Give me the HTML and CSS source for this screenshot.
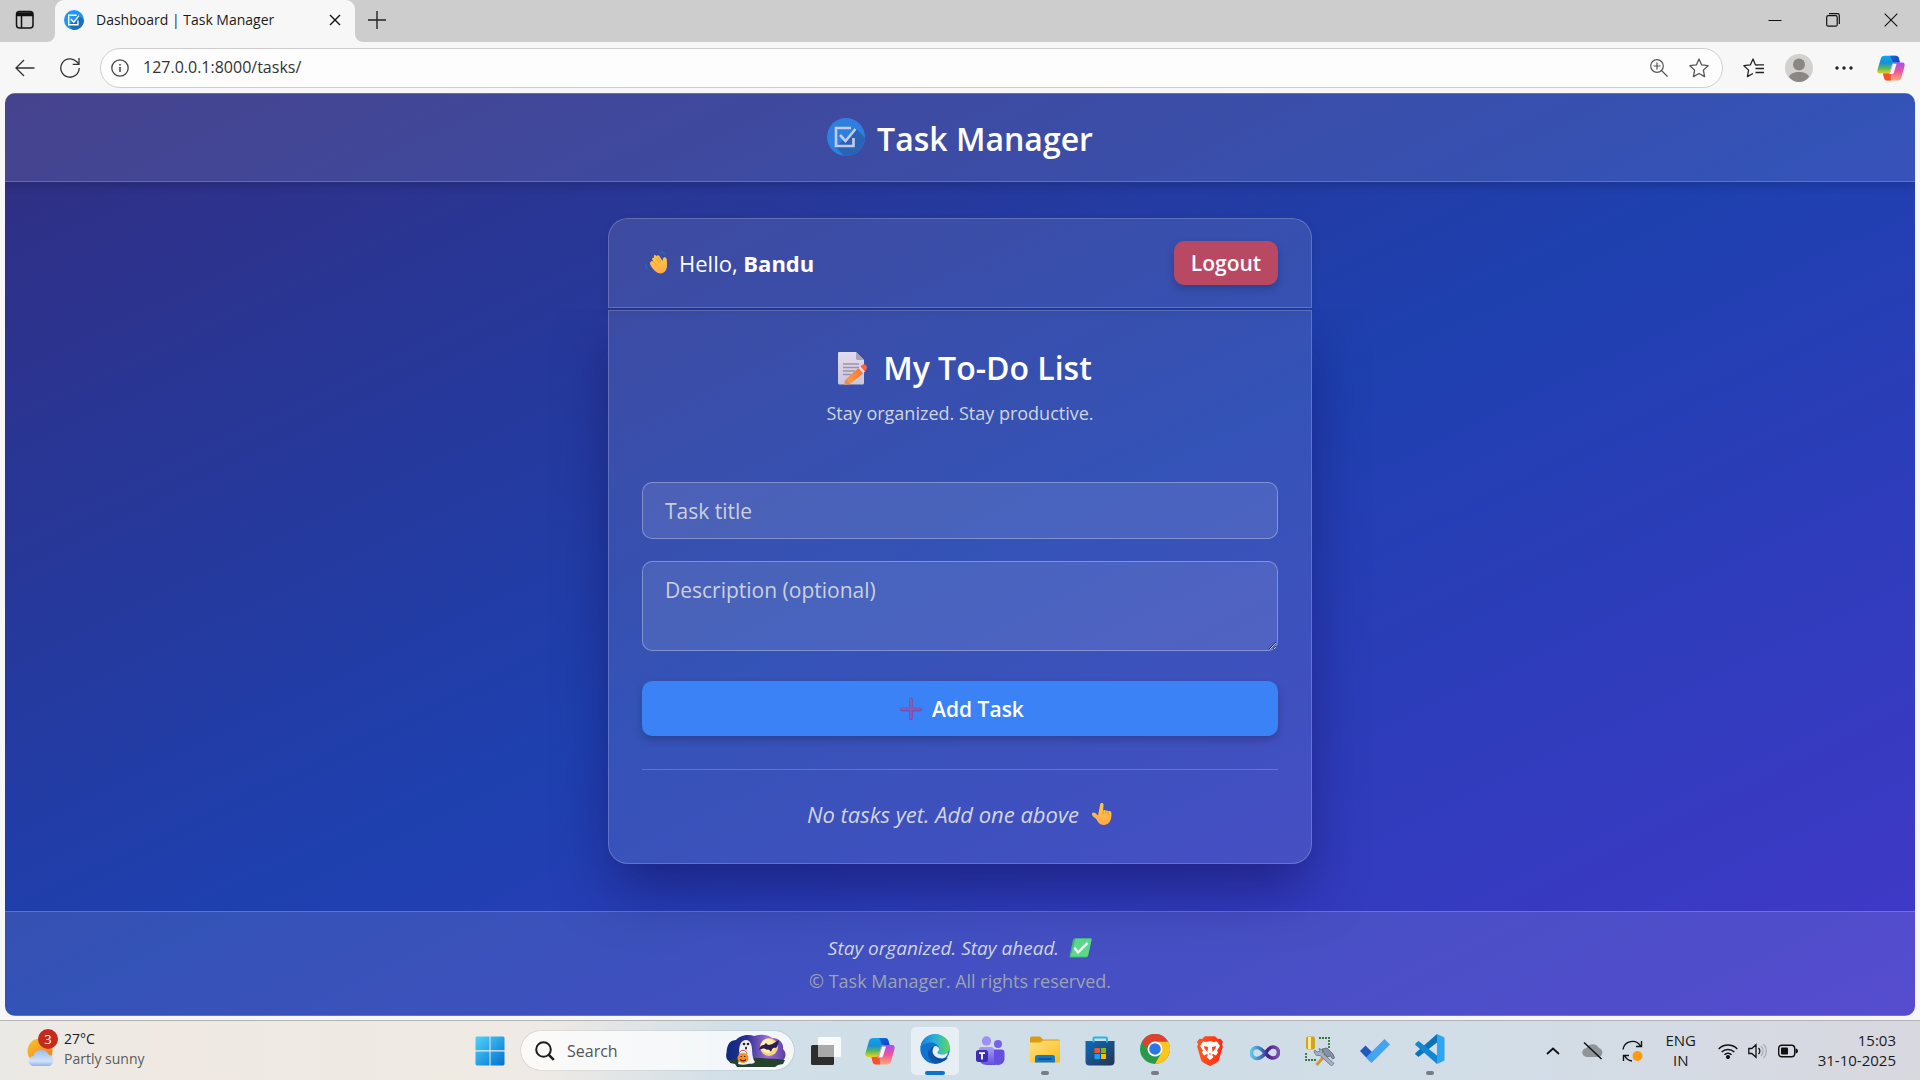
FILE: index.html
```html
<!DOCTYPE html>
<html lang="en">
<head>
<meta charset="utf-8">
<meta name="viewport" content="width=device-width, initial-scale=1">
<title>Dashboard | Task Manager</title>
<link rel="stylesheet" href="styles.css">
</head>
<body class="desktop">
<svg width="0" height="0" class="defs" aria-hidden="true">
  <defs>
    <linearGradient id="cpA" x1="0" y1="0" x2="0" y2="1"><stop offset="0" stop-color="#12a5ee"/><stop offset=".4" stop-color="#1690d8"/><stop offset=".7" stop-color="#5cb85a"/><stop offset="1" stop-color="#f5d01a"/></linearGradient>
    <linearGradient id="cpB" x1="0" y1="0" x2="0" y2="1"><stop offset="0" stop-color="#a94df0"/><stop offset=".5" stop-color="#f0559b"/><stop offset="1" stop-color="#ffab70"/></linearGradient>
    <linearGradient id="cpC" x1="0" y1="0" x2="1" y2="1"><stop offset="0" stop-color="#0d6fd8"/><stop offset="1" stop-color="#1b3bc4"/></linearGradient>
    <linearGradient id="win" x1="0" y1="0" x2="1" y2="1"><stop offset="0" stop-color="#4fd3fb"/><stop offset="1" stop-color="#0470cf"/></linearGradient>
    <linearGradient id="edgeA" x1="0" y1="0" x2="1" y2="0"><stop offset="0" stop-color="#1580d6"/><stop offset=".5" stop-color="#27b3d8"/><stop offset="1" stop-color="#5fd858"/></linearGradient>
    <linearGradient id="fold" x1="0" y1="0" x2="1" y2="1"><stop offset="0" stop-color="#ffe07c"/><stop offset="1" stop-color="#fbbd20"/></linearGradient>
    <linearGradient id="store" x1="0" y1="0" x2="1" y2="1"><stop offset="0" stop-color="#0d6cbd"/><stop offset="1" stop-color="#28324e"/></linearGradient>
    <linearGradient id="team" x1="0" y1="0" x2="0" y2="1"><stop offset="0" stop-color="#a99bf7"/><stop offset="1" stop-color="#6250e0"/></linearGradient>
    <linearGradient id="vsi" x1="0" y1="0" x2="1" y2="0"><stop offset="0" stop-color="#5cc4e8"/><stop offset=".4" stop-color="#3a6db8"/><stop offset=".6" stop-color="#4a1a8c"/><stop offset="1" stop-color="#7a4fb0"/></linearGradient>
    <linearGradient id="brave" x1="0" y1="0" x2="1" y2="0"><stop offset="0" stop-color="#ff5a1f"/><stop offset="1" stop-color="#ff2a10"/></linearGradient>
    <linearGradient id="sun" x1="0" y1="0" x2="1" y2="1"><stop offset="0" stop-color="#f7c52c"/><stop offset="1" stop-color="#f07818"/></linearGradient>
    <linearGradient id="cloud" x1="0" y1="0" x2="0" y2="1"><stop offset="0" stop-color="#9dbdf0"/><stop offset=".7" stop-color="#d3e2f8"/><stop offset="1" stop-color="#8fb0ec"/></linearGradient>
    <linearGradient id="night" x1="0" y1="0" x2="1" y2="0"><stop offset="0" stop-color="#0b2a80"/><stop offset=".35" stop-color="#2b2f90"/><stop offset=".7" stop-color="#a070d8"/><stop offset="1" stop-color="#5a3fa8"/></linearGradient>
    <linearGradient id="skin" x1="0" y1="0" x2="0" y2="1"><stop offset="0" stop-color="#ffcb3d"/><stop offset="1" stop-color="#ffa94a"/></linearGradient>
    <linearGradient id="pencil" x1="0" y1="1" x2="1" y2="0"><stop offset="0" stop-color="#ffa53c"/><stop offset="1" stop-color="#f9703a"/></linearGradient>
    <linearGradient id="plusg" x1="0" y1="0" x2="0" y2="1"><stop offset="0" stop-color="#7a68a8"/><stop offset="1" stop-color="#8e4fd0"/></linearGradient>
    <linearGradient id="page" x1="0" y1="0" x2="0" y2="1"><stop offset="0" stop-color="#e3dcec"/><stop offset="1" stop-color="#cdc6dc"/></linearGradient>
    <symbol id="copilot" viewBox="0 0 30 28">
      <path d="M8 1h12c2 0 3 1 3.500 3l1 4h-5c-2 0-3 1-3.500 3l-2 6c-.6 2-1.600 3-3.500 3H3c-2.500 0-3-2-2.500-4L4 4c.6-2 2-3 4-3z" fill="url(#cpA)"/>
      <path d="M14 1h6c2 0 3 1 3.500 3l1 4h-5c-2 0-3-.6-3.600-3z" fill="url(#cpC)"/>
      <path d="M22 27.500H11c-2 0-3-1-3.500-3L6.500 20H11c2 0 3-1 3.500-3l2-6c.6-2 1.600-3 3.500-3h7c2.500 0 3 2 2.500 4L26 24.500c-.6 2-2 3-4 3z" fill="url(#cpB)"/>
      <path d="M15 27.500h-4c-2 0-3-1-3.500-3L6.500 20H11c2 0 3-1 3.500-3z" fill="#f4532f"/>
      <path d="M17.500 9.500h3.500l-3 9.500c-.5 1.200-1.200 1.500-2.500 1.500h-3c1.200-.6 1.800-1.800 2.200-3l1.600-5c.3-1.200.6-2.200 1.200-3z" fill="#f3f5f7"/>
    </symbol>
    <symbol id="check-logo" viewBox="0 0 38 38">
      <circle cx="19" cy="19" r="19" fill="var(--logo-a)"/>
      <path d="M29.500 11l8.300 8.500A19 19 0 0 1 17 37.900L8.500 29z" fill="var(--logo-b)"/>
      <path d="M24 10H9v18h17.500v-8M13 17l5.500 6L28.500 11" fill="none" stroke="var(--logo-c)" stroke-width="2.600"/>
    </symbol>
  </defs>
</svg>

<header class="tabstrip">
  <div class="tabstrip-start">
    <button class="chrome-btn" aria-label="Tab actions"><svg width="20" height="20" viewBox="0 0 20 20" fill="none" stroke="#111" stroke-width="1.500"><rect x="1.500" y="1.500" width="16.500" height="16.500" rx="3"/><path d="M2 4h16M2 3h16M2 5.500h16M6.500 6v12"/></svg></button>
  </div>
  <div class="tab-well">
    <div class="tab">
      <svg class="logo-bright" width="20" height="20"><use href="#check-logo"/></svg>
      <span class="tab-title">Dashboard | Task Manager</span>
      <button class="chrome-btn tab-close" aria-label="Close tab"><svg width="12" height="12" viewBox="0 0 12 12" stroke="#111" stroke-width="1.400"><path d="M1 1l10 10M11 1L1 11"/></svg></button>
    </div>
  </div>
  <div class="tabstrip-end">
    <button class="chrome-btn new-tab" aria-label="New tab"><svg width="18" height="18" viewBox="0 0 18 18" stroke="#222" stroke-width="1.400"><path d="M9 0v18M0 9h18"/></svg></button>
    <div class="window-controls">
      <button class="win-btn" aria-label="Minimize"><svg width="14" height="14" viewBox="0 0 14 14" stroke="#111"><path d="M.5 7.500h13"/></svg></button>
      <button class="win-btn" aria-label="Restore"><svg width="14" height="14" viewBox="0 0 14 14" fill="none" stroke="#111" stroke-width="1.200"><rect x=".7" y="2.700" width="10.500" height="10.500" rx="1.500"/><path d="M3 .7h8.500a1.800 1.800 0 0 1 1.800 1.800V11"/></svg></button>
      <button class="win-btn" aria-label="Close"><svg width="14" height="14" viewBox="0 0 14 14" stroke="#111" stroke-width="1.100"><path d="M.7.7l12.600 12.600M13.300.7L.7 13.300"/></svg></button>
    </div>
  </div>
</header>

<nav class="toolbar" aria-label="Browser">
  <button class="tool-btn" aria-label="Back"><svg width="20" height="18" viewBox="0 0 20 18" fill="none" stroke="#333" stroke-width="1.300"><path d="M19.500 9H1M9 1L1 9l8 8"/></svg></button>
  <button class="tool-btn" aria-label="Refresh"><svg width="20" height="20" viewBox="0 0 20 20" fill="none" stroke="#333" stroke-width="1.300"><path d="M19.200 10A9.200 9.200 0 1 1 16.500 3.500L19 6M19 0v6.300h-6.300"/></svg></button>
  <div class="address">
    <svg width="18" height="18" viewBox="0 0 18 18" fill="none" stroke="#444" stroke-width="1.300"><circle cx="9" cy="9" r="8.200"/><path d="M9 8v5M9 5v1.500" stroke-width="1.500"/></svg>
    <input class="address-input" type="text" aria-label="Address" value="127.0.0.1:8000/tasks/">
    <button class="tool-btn small" aria-label="Zoom"><svg width="18" height="18" viewBox="0 0 18 18" fill="none" stroke="#555" stroke-width="1.200"><circle cx="7" cy="7" r="6.300"/><path d="M11.500 11.500l6 6M7 3.500v7M3.500 7h7"/></svg></button>
    <button class="tool-btn small" aria-label="Add to favorites"><svg width="20" height="20" viewBox="0 0 20 20" fill="none" stroke="#555" stroke-width="1.300" stroke-linejoin="round"><path d="M10 1l2.700 5.900 6.400.8-4.700 4.400 1.200 6.500L10 15.500l-5.600 3.100 1.200-6.500L.9 7.700l6.400-.8z"/></svg></button>
  </div>
  <div class="toolbar-end">
    <button class="tool-btn" aria-label="Favorites"><svg width="21" height="20" viewBox="0 0 21 20" fill="none" stroke="#222" stroke-width="1.300" stroke-linejoin="round"><path d="M15 7.200l-2.500-.3L10 1 7.300 6.900.9 7.700l4.700 4.400-1.200 6.500L10 15.500M12.500 10.500h8.500M12.500 14.500H21M12.500 6.900H21"/></svg></button>
    <button class="tool-btn" aria-label="Profile"><svg width="28" height="28" viewBox="0 0 28 28"><circle cx="14" cy="14" r="14" fill="#d3d1cd"/><circle cx="14" cy="10.500" r="6" fill="#8b8783"/><path d="M4 23c1-3.500 5-5 10-5s9 1.500 10 5c-2.500 3-6 5-10 5s-7.500-2-10-5z" fill="#8b8783"/></svg></button>
    <button class="tool-btn" aria-label="Settings and more"><svg width="18" height="4" viewBox="0 0 18 4" fill="#222"><circle cx="2" cy="2" r="1.700"/><circle cx="9" cy="2" r="1.700"/><circle cx="16" cy="2" r="1.700"/></svg></button>
    <button class="tool-btn wide" aria-label="Copilot"><svg width="28" height="28"><use href="#copilot"/></svg></button>
  </div>
</nav>

<div class="viewport">
  <div class="app">
    <header class="app-header">
      <svg class="logo-soft" width="38" height="38"><use href="#check-logo"/></svg>
      <h1 class="app-name">Task Manager</h1>
    </header>

    <main class="app-main">
      <section class="panel greeting">
        <p class="hello">
          <svg width="24" height="24" viewBox="0 0 24 24"><path d="M14 1.500c2.500-.5 4.500 0 6 2M17 .8l2.500 1.500M1 13c-.5 2 0 4 1.500 5.500" fill="none" stroke="#1f6ab0" stroke-width="1.400"/><path d="M6 10.500c.7-.9 1.700-.6 2.500.2l-1.300-2.300c-.6-1.300.9-2.300 1.900-1.200L8.900 5.500c-.3-1.500 1.400-2.100 2.200-.9l.8 1c0-1.400 1.700-1.700 2.400-.5l3.200 5c.4-1.600.3-3.100 1.400-3.600 1.600-.6 2.800.7 2.900 2.700.2 3.600.6 6.600-.6 9.300-1.500 3.800-6.500 5-9.700 2.800C8.600 18.800 5 14.500 5 12.500c0-1 .4-1.600 1-2z" fill="url(#skin)"/><path d="M8.500 10.500l3 3.500M10.500 7l4 5M12.500 6l3.300 5" stroke="#e8912a" stroke-width=".7" fill="none"/></svg>
          <span>Hello, <strong>Bandu</strong></span>
        </p>
        <button class="logout">Logout</button>
      </section>

      <section class="panel todo">
        <h2 class="todo-title">
          <svg width="32" height="34" viewBox="0 0 32 34"><path d="M2 1h17l8 8v23a1.500 1.500 0 0 1-1.500 1.500h-23A1.500 1.500 0 0 1 1 32V2a1 1 0 0 1 1-1z" fill="url(#page)"/><path d="M19 1l8 8h-6.500A1.500 1.500 0 0 1 19 7.500z" fill="#aaa2b8"/><path d="M6 13h16M6 16.500h16M6 20h12M6 23.500h8" stroke="#9a92aa" stroke-width="1.300"/><path d="M8 29L21.500 17l4.800 5.200L13 33l-5.500.7z" fill="url(#pencil)"/><path d="M21.500 17l2-1.600 4.600 5.200-1.800 1.600z" fill="#e4d8ee"/><path d="M23.500 15.400l2.200-1.800c1.300-.8 2.500-.3 3.300.6.900 1 1.500 2.400.6 3.600l-1.500 2.800z" fill="#ff6146"/><path d="M8 29l3 1 2 3-5.500.7z" fill="#d98d73"/></svg>
          <span>My To-Do List</span>
        </h2>
        <p class="todo-sub">Stay organized. Stay productive.</p>
        <form class="todo-form">
          <input class="field" type="text" placeholder="Task title" aria-label="Task title">
          <textarea class="field field-area" rows="2" placeholder="Description (optional)" aria-label="Description (optional)"></textarea>
          <button class="add" type="button">
            <svg width="22" height="22" viewBox="0 0 22 22"><path d="M11 1.800v18.400M1.800 11.500h18.400" stroke="#5c48a8" stroke-width="3.600" stroke-linecap="round"/><path d="M9.500 2a1.500 1.500 0 0 1 3 0v7.500H20a1.500 1.500 0 0 1 0 3h-7.500V20a1.500 1.500 0 0 1-3 0v-7.500H2a1.500 1.500 0 0 1 0-3h7.500z" fill="url(#plusg)"/></svg>
            <span>Add Task</span>
          </button>
        </form>
        <p class="empty">
          <span>No tasks yet. Add one above</span>
          <svg width="22" height="24" viewBox="0 0 22 24"><path d="M9.200 2.500C9.600.5 12.600.6 12.500 2.800l-.4 6c.8-1 2.200-.9 2.700 0 .9-.6 2-.3 2.400.6 1.300-.7 3.200-.1 3.300 2 .1 3.600-.4 6.400-2.300 9.100-2 2.900-7.500 3.300-10 .8-1.700-1.800-2.300-4.100-4.200-5.300C2 14.800.8 13.200 1 11.800c.3-1.600 2.300-1.600 3.300-.7l2.700 2.300c.9-3.600 1.500-7.300 2.200-10.900z" fill="url(#skin)"/><path d="M12 9l-.3 3M14.900 9.200l-.3 2.800M17.300 10l-.5 2.500" stroke="#e08a2a" stroke-width=".8"/></svg>
        </p>
      </section>
    </main>

    <footer class="app-footer">
      <p class="motto"><span>Stay organized. Stay ahead.</span>
        <svg width="23" height="20" viewBox="0 0 23 20"><path d="M5.500.5H21.500a1 1 0 0 1 1 1.300L19 18a2 2 0 0 1-2 1.500H1.500a1 1 0 0 1-1-1.300L4 1.800A2 2 0 0 1 5.500.5z" fill="#3fb870"/><path d="M6.500.5h15a1 1 0 0 1 1 1.300L19.200 17a2 2 0 0 1-2 1.500H3a1 1 0 0 1-1-1.300z" fill="#5cd98b"/><path d="M6 10.500l3 4 9-9" fill="none" stroke="#fff" stroke-width="2.400" stroke-linecap="round" stroke-linejoin="round"/></svg>
      </p>
      <p class="copyright">© Task Manager. All rights reserved.</p>
    </footer>
  </div>
</div>

<footer class="taskbar">
  <button class="weather">
    <span class="weather-icon">
      <svg width="28" height="28" viewBox="0 0 28 28"><circle cx="13" cy="13" r="12.500" fill="url(#sun)"/><path d="M7 28a5 5 0 0 1-.5-10 8 8 0 0 1 15-1.500A6 6 0 0 1 22 28z" fill="url(#cloud)"/></svg>
      <span class="badge">3</span>
    </span>
    <span class="weather-text"><span>27°C</span><span class="muted">Partly sunny</span></span>
  </button>

  <div class="dock">
    <button class="dock-btn" aria-label="Start"><svg width="30" height="30" viewBox="0 0 30 30" fill="url(#win)"><path d="M2 .5h12.500v13.800H.5V2A1.500 1.500 0 0 1 2 .5zM15.500.5H28A1.500 1.500 0 0 1 29.500 2v12.300h-14zM.5 15.400h14v14H2A1.500 1.500 0 0 1 .5 28zM15.500 15.400h14V28a1.500 1.500 0 0 1-1.500 1.400H15.500z"/></svg></button>
    <div class="search">
      <svg width="20" height="20" viewBox="0 0 20 20" fill="none" stroke="#1d1d1d" stroke-width="2"><circle cx="8.500" cy="8.500" r="7.300"/><path d="M13.800 13.800l5 5" stroke-width="2.600"/></svg>
      <input class="search-input" type="text" placeholder="Search" aria-label="Search">
      <svg width="64" height="34" viewBox="0 0 64 34"><path d="M10 29C3 29 0 24 1.500 19 2 9 6 6 11 6 15 1 24 0 29 2c7-2 13-2 18 2 8 0 12 6 11 11 5 5 2 12-4 13z" fill="url(#night)"/><path d="M4 26c12-2 40-3 56 0l-2 4-5 1-3 2H12l-2-3-5-1z" fill="#23432f"/><circle cx="44" cy="13" r="9" fill="#f7d080"/><circle cx="43" cy="12" r="7" fill="#fff0b0"/><path d="M34 16c1-4 3-5 5-5l2-2 2 2c4 0 7-3 11-5-1 4-1 6-3 8-2-1-4 0-5 4-1-2-3-3-4-2-2-2-5-2-8 0z" fill="#2c1d4e"/><path d="M13 30c2-7 0-13 2-19 2-6 9-7 11-1 2 5 0 12 4 18-3 3-5 1-7 2-3 1-7 1-10 0z" fill="#f4edfc"/><circle cx="19" cy="10" r="1.300" fill="#222"/><circle cx="23" cy="10" r="1.300" fill="#222"/><ellipse cx="21" cy="14" rx="1" ry="1.500" fill="#222"/><ellipse cx="18" cy="24" rx="5.500" ry="5" fill="#f5901d"/><path d="M14 20c1-5 7-5 8 0" fill="none" stroke="#c06010"/><path d="M15.500 22.500h1.500M19 22.500h1.500M15 25.500c2 2 4 2 6 0" stroke="#5a2500" stroke-width="1.200" fill="none"/></svg>
    </div>
    <button class="dock-btn" aria-label="Task view"><svg width="32" height="30" viewBox="0 0 32 30"><rect x="2" y="9" width="23" height="20" rx="1.500" fill="#2d2d2d"/><rect x="9" y="1" width="23" height="20" rx="1.500" fill="#fff" fill-opacity=".85"/><path d="M9 9h16v12H9z" fill="#a9a9a9"/></svg></button>
    <button class="dock-btn" aria-label="Copilot"><svg width="30" height="30"><use href="#copilot"/></svg></button>
    <button class="dock-btn active" aria-label="Edge"><svg width="30" height="30" viewBox="0 0 30 30"><circle cx="15" cy="15" r="14.700" fill="#1173cf"/><path d="M.5 13C2 5 8 .3 15 .3 23.500.3 29.700 6 29.700 13c0 5-3.500 7.500-7.700 7.500-3 0-4.500-.8-4.500-2 0-1 1.500-1.300 1.500-3.500C19 11 15 8.500 11 8.500 6 8.500 2 11 .5 13z" fill="url(#edgeA)"/><path d="M11 15c0 7 5 12.500 12.500 12 2-.5 3.500-2 4.300-3.300C24 26 15 26 13 19c-.6-2.500.5-5 2-6-2-.5-4 .5-4 2z" fill="#0f4a96"/><path d="M11 15c0 8 5.500 12.500 12.500 12A14.500 14.500 0 0 1 15 29.700C10 28 7.500 23 8 18.500c.3-1.500 1-3 3-3.500z" fill="#0d57a6"/><path d="M15 12c2.500 0 4 1.500 4 3.500 0 1.800-1.500 2-1.500 3s1.500 2 4.500 2c2.500 0 4.500-.8 6-2.300-.3 3-2 5.300-4.500 6-5 .8-9-1.200-10.500-4.700-1-3 0-6.500 2-7.500z" fill="#e6eef3"/><path d="M14 21.500c2 3.500 8 4.500 13.500 1.700-2 3-4 4-6 4-4 0-7-2.500-7.500-5.700z" fill="#0f4a96"/></svg></button>
    <button class="dock-btn" aria-label="Teams"><svg width="30" height="30" viewBox="0 0 30 30"><circle cx="11.500" cy="5" r="4.700" fill="#9e8ff5"/><circle cx="23" cy="8" r="4" fill="#7562e6"/><path d="M17 13.500h9.500a3 3 0 0 1 3 3V23a6.500 6.500 0 0 1-12 3z" fill="#6450dd"/><path d="M5 11h11a3 3 0 0 1 3 3v9c0 4 1.500 5 3 6H12c-5 0-8-3-8-7v-9z" fill="url(#team)"/><rect x="1" y="14" width="12" height="12" rx="2.500" fill="#3b2fb0"/><path d="M4 17.200h6M7 17v6.500" stroke="#fff" stroke-width="1.800"/></svg></button>
    <button class="dock-btn running" aria-label="File Explorer"><svg width="30" height="30" viewBox="0 0 30 30"><path d="M0 4.500A2 2 0 0 1 2 2.500h8l3 3h15a2 2 0 0 1 2 2V14H0z" fill="#dd9a0c"/><path d="M0 8.500h10l3-2h17V27a1.500 1.500 0 0 1-1.500 1.500h-27A1.500 1.500 0 0 1 0 27z" fill="url(#fold)"/><path d="M5 28.500v-5a2.500 2.500 0 0 1 2.500-2.500h15a2.500 2.500 0 0 1 2.500 2.500v5z" fill="#1279c9"/><path d="M8.500 25h13" stroke="#0b4a90" stroke-width="1.500"/></svg></button>
    <button class="dock-btn" aria-label="Microsoft Store"><svg width="30" height="30" viewBox="0 0 30 30"><path d="M.5 5h29v20.500a4 4 0 0 1-4 4h-21a4 4 0 0 1-4-4z" fill="url(#store)"/><path d="M8.500 6.500V2.500a1 1 0 0 1 1-1h11.500a1 1 0 0 1 1 1v4" fill="none" stroke="#24b8ea" stroke-width="2"/><path d="M9.500 12H15v5H9.500z" fill="#f35325"/><path d="M16 12h5v5h-5z" fill="#81bc06"/><path d="M9.500 18H15v5H9.500z" fill="#12a5ee"/><path d="M16 18h5v5h-5z" fill="#ffba08"/></svg></button>
    <button class="dock-btn running" aria-label="Chrome"><svg width="30" height="30" viewBox="0 0 30 30"><circle cx="15" cy="15" r="15" fill="#2a9a48"/><path d="M15 7.500h13A15 15 0 0 1 15 30l6.500-11.200z" fill="#fcc61c"/><path d="M2 7.500A15 15 0 0 1 28 7.500H15a7.500 7.500 0 0 0-6.500 3.800L6 14z" fill="#e0402f"/><circle cx="15" cy="15" r="7.500" fill="#fff"/><circle cx="15" cy="15" r="5.800" fill="#2b75e8"/></svg></button>
    <button class="dock-btn" aria-label="Brave"><svg width="28" height="30" viewBox="0 0 28 30"><path d="M9 .3h10L22 3l2.500-.3 2.500 3-1 2.500.8 2.500-3.800 13c-.5 2-2.500 3.300-9 6.200-6.500-2.900-8.500-4.200-9-6.200L1.200 10.700 2 8.200l-1-2.500 2.500-3L6 3z" fill="url(#brave)"/><path d="M7 5.500l3.500.6L14 5l3.500 1.100L21 5.500l3 4.500-3 4.500 1 2-2 3-3-1.500-1 1 1.500 2L14 24l-3.500-3 1.500-2-1-1-3 1.500-2-3 1-2L4 10z" fill="#fff"/><path d="M8 10l4 1-.5 5-3-3.500M20 10l-4 1 .5 5 3-3.500M12.500 17.500h3L14 19z" fill="#ff4018"/></svg></button>
    <button class="dock-btn" aria-label="Visual Studio"><svg width="30" height="30" viewBox="0 0 30 30"><path d="M15 17.500C12 21 10 22.500 7 22.500a5.500 5.500 0 0 1 0-11c3 0 5 2 8 5.500s5 5 8 5a5.500 5.500 0 0 0 0-11c-3 0-5 2-8 6.500z" fill="none" stroke="url(#vsi)" stroke-width="3.600"/></svg></button>
    <button class="dock-btn" aria-label="Database tools"><svg width="30" height="30" viewBox="0 0 30 30"><rect x="1" y=".5" width="9" height="13" rx="2" fill="#d0a41c"/><rect x="3" y="1" width="3" height="12" fill="#fbe98a"/><path d="M14 2h10v10M1 17v7h11" fill="none" stroke="#34743c" stroke-width="1.800" stroke-dasharray="2 1"/><path d="M11.500 29L22 17" stroke="#c99b3c" stroke-width="3"/><path d="M10 14l2 2 3-1-1-2.500 3.500 1.500v3L29 27.500 26.500 30 15 19.500l-3.500 0L9 16z" fill="#a3afc0" stroke="#5b6880" stroke-width=".7"/><path d="M17 13l5-1 6 6 1.500 4-2 1-2-3-3 1-3-3z" fill="#8593a9" stroke="#4b5870" stroke-width=".7"/></svg></button>
    <button class="dock-btn" aria-label="To Do"><svg width="32" height="28" viewBox="0 0 32 28"><path d="M1 14l5.500-5.500 10.300 10.300L11 24.500z" fill="#1e5bbd"/><path d="M7 20.500L25.500 2 31 7.500 12.500 26z" fill="#44a4f0"/></svg></button>
    <button class="dock-btn running" aria-label="Visual Studio Code"><svg width="30" height="30" viewBox="0 0 30 30"><path d="M22 0l7.500 3.500v23L22 30V0z" fill="#2ea5f0"/><path d="M22 0v8.500L3.500 23 .5 20.500c-.5-.6-.5-1 0-1.500z" fill="#0a74bb"/><path d="M22 30v-8.500L3.500 7 .5 9.500c-.5.600-.5 1 0 1.500z" fill="#1186d4"/></svg></button>
  </div>

  <div class="tray">
    <button class="tray-btn" aria-label="Show hidden icons"><svg width="14" height="8" viewBox="0 0 14 8" fill="none" stroke="#111" stroke-width="1.800"><path d="M1 7l6-5.500L13 7"/></svg></button>
    <button class="tray-btn" aria-label="OneDrive"><svg width="22" height="18" viewBox="0 0 22 18"><path d="M5 15a4.500 4.500 0 0 1-.5-9 7 7 0 0 1 12.500 0 4.700 4.700 0 0 1 0 9z" fill="#8f9499"/><path d="M2 .5L19.500 17" stroke="#111" stroke-width="1.500"/></svg></button>
    <button class="tray-btn" aria-label="Update"><svg width="22" height="22" viewBox="0 0 22 22" fill="none" stroke="#111" stroke-width="1.400"><path d="M1 9.500A9.500 9.500 0 0 1 18.500 6M19.500 1v5.500H14M10 21a9.500 9.500 0 0 1-7.500-5.500M1.500 21v-5.500H7"/><circle cx="15.500" cy="16" r="5" fill="#ff9a0a" stroke="none"/></svg></button>
    <span class="lang"><span>ENG</span><span>IN</span></span>
    <div class="status">
      <svg width="20" height="16" viewBox="0 0 20 16" fill="none" stroke="#111" stroke-width="1.500"><path d="M.7 6a13 13 0 0 1 18.600 0M3.700 9a9 9 0 0 1 12.600 0M6.500 11.800a5 5 0 0 1 7 0"/><circle cx="10" cy="14" r="1.300" fill="#111"/></svg>
      <svg width="20" height="16" viewBox="0 0 20 16" fill="none" stroke="#111" stroke-width="1.300"><path d="M.8 5.500h3L8 1.800v12.400l-4.200-3.700h-3zM10.500 5a4 4 0 0 1 0 6"/><path d="M13 3a7 7 0 0 1 0 10M15.500 1a10 10 0 0 1 0 14" stroke="#a9abb2"/></svg>
      <svg width="20" height="14" viewBox="0 0 20 14"><rect x=".7" y="1.200" width="16" height="11.600" rx="3" fill="none" stroke="#111" stroke-width="1.400"/><rect x="3" y="3.500" width="7" height="7" rx="1" fill="#111"/><path d="M17.500 4.500c1.500 0 2.500 1 2.500 2.500s-1 2.500-2.500 2.500z" fill="#111"/></svg>
    </div>
    <span class="clock"><span>15:03</span><span>31-10-2025</span></span>
  </div>
</footer>
</body>
</html>
```
FILE: styles.css
```css
* { box-sizing: border-box; }

html { height: 100%; }

button, input, textarea { font: inherit; color: inherit; }

button { border: 0; background: none; padding: 0; cursor: pointer; }

p, h1, h2 { margin: 0; }

svg { display: block; flex: none; }

.desktop {
  margin: 0;
  min-height: 100%;
  display: flex;
  flex-direction: column;
  background: #f7f7f7;
  color: #1b1b1b;
  font-family: "Open Sans", "Noto Sans", sans-serif;
}

.defs { height: 0; }

/* Browser tab strip */
.tabstrip { display: flex; height: 42px; background: #f7f7f7; }

.tabstrip-start {
  display: flex;
  align-items: center;
  justify-content: center;
  width: 55px;
  padding: 0 5px 2px 0;
  background: #cdcdcd;
  border-bottom-right-radius: 8px;
}

.tab-well { background: linear-gradient(#cdcdcd 20px, #f7f7f7 20px); }

.tab {
  display: flex;
  align-items: center;
  gap: 12px;
  width: 300px;
  height: 42px;
  padding: 0 14px 2px 9px;
  background: #f7f7f7;
  border-radius: 9px 9px 0 0;
  font-size: 14px;
}

.tab-title { flex: 1; padding-bottom: 2px; white-space: nowrap; }

.tabstrip-end {
  flex: 1;
  display: flex;
  align-items: center;
  justify-content: space-between;
  padding: 0 0 2px 13px;
  background: #cdcdcd;
  border-bottom-left-radius: 8px;
}

.window-controls { display: flex; height: 100%; }

.win-btn { display: grid; place-items: center; width: 58px; }

.logo-bright { --logo-a: #2196f3; --logo-b: #1a6fb8; --logo-c: #ffffff; }

.logo-soft { --logo-a: #2f7fe0; --logo-b: #2a63b4; --logo-c: #c3cbe8; }

/* Browser toolbar */
.toolbar {
  display: flex;
  align-items: center;
  height: 51px;
  padding: 1px 4px 0 2px;
}

.tool-btn { display: grid; place-items: center; width: 45px; height: 40px; }

.tool-btn.small { width: 40px; }

.tool-btn.wide { width: 50px; }

.address {
  flex: 1;
  display: flex;
  align-items: center;
  height: 40px;
  margin: 0 8px;
  padding: 0 3px 0 10px;
  border: 1px solid #cfcfcf;
  border-radius: 20px;
  background: #fdfdfd;
}

.address-input {
  flex: 1;
  min-width: 0;
  margin-left: 12px;
  padding: 0 2px 2px;
  border: 0;
  outline: 0;
  background: none;
  font-size: 16px;
  color: #333;
}

.toolbar-end { display: flex; }

/* Web page */
.viewport { flex: 1; display: flex; padding: 0 5px; }

.app {
  flex: 1;
  display: flex;
  flex-direction: column;
  overflow: hidden;
  border-radius: 10px;
  background: linear-gradient(to bottom right, #312e81, #1e40af, #4338ca);
  color: #fff;
}

.app-header {
  display: flex;
  align-items: center;
  justify-content: center;
  gap: 12px;
  height: 89px;
  padding-bottom: 2px;
  background: rgba(255, 255, 255, 0.1);
  border: solid rgba(255, 255, 255, 0.2);
  border-width: 1px 0;
  box-shadow: 0 4px 8px rgba(0, 0, 0, 0.15);
}

.app-name { padding-top: 4px; font-size: 32px; font-weight: 600; line-height: 40px; }

.app-main {
  flex: 1;
  display: flex;
  flex-direction: column;
  gap: 2px;
  width: 100%;
  max-width: 704px;
  margin: 0 auto;
  padding: 36px 0 46px;
}

.panel {
  padding: 0 33px;
  background: rgba(255, 255, 255, 0.1);
  border: 1px solid rgba(255, 255, 255, 0.2);
}

.greeting {
  display: flex;
  align-items: center;
  justify-content: space-between;
  height: 90px;
  border-radius: 20px 20px 0 0;
  box-shadow: 0 4px 10px rgba(0, 0, 0, 0.1);
}

.hello { display: flex; align-items: center; gap: 10px; padding-left: 3px; font-size: 22px; }

.logout {
  width: 104px;
  height: 44px;
  border-radius: 10px;
  background: #b94863;
  box-shadow: 0 4px 8px rgba(0, 0, 0, 0.2);
  font-size: 21px;
  font-weight: 600;
}

.todo {
  display: flex;
  flex-direction: column;
  padding-top: 35px;
  padding-bottom: 34px;
  border-radius: 0 0 20px 20px;
  box-shadow: 0 28px 56px -6px rgba(15, 8, 80, 0.5);
  clip-path: inset(0 -80px -100px -80px);
}

.todo-title {
  display: flex;
  align-items: center;
  justify-content: center;
  gap: 14px;
  padding-left: 9px;
  font-size: 32px;
  font-weight: 600;
  line-height: 44px;
}

.todo-sub {
  margin-top: 8px;
  color: #d1d5db;
  font-size: 18px;
  line-height: 30px;
  text-align: center;
}

.todo-form {
  display: flex;
  flex-direction: column;
  margin-top: 54px;
  padding-bottom: 33px;
  border-bottom: 1px solid rgba(255, 255, 255, 0.2);
}

.field {
  width: 100%;
  height: 57px;
  padding: 0 22px;
  border: 1px solid rgba(255, 255, 255, 0.3);
  border-radius: 10px;
  outline: 0;
  background: rgba(255, 255, 255, 0.1);
  font-size: 21px;
}

.field::placeholder, .search-input::placeholder { color: #cbd0dc; opacity: 1; }

.field-area { height: 90px; margin-top: 22px; padding: 13px 22px; line-height: 30px; }

.add {
  display: flex;
  align-items: center;
  justify-content: center;
  gap: 10px;
  height: 55px;
  margin-top: 30px;
  padding-left: 4px;
  border-radius: 10px;
  background: #3b82f6;
  box-shadow: 0 4px 8px rgba(0, 0, 0, 0.2);
  font-size: 21px;
  font-weight: 600;
}

.empty {
  display: flex;
  align-items: center;
  justify-content: center;
  gap: 12px;
  margin-top: 29px;
  color: #d1d5db;
  font-size: 22px;
  font-style: italic;
  line-height: 30px;
}

.app-footer {
  display: flex;
  flex-direction: column;
  align-items: center;
  gap: 3px;
  height: 105px;
  padding-top: 21px;
  background: rgba(255, 255, 255, 0.1);
  border: solid rgba(255, 255, 255, 0.2);
  border-width: 1px 0;
  line-height: 30px;
}

.motto {
  display: flex;
  align-items: center;
  gap: 10px;
  color: #d1d5db;
  font-size: 19px;
  font-style: italic;
}

.copyright { color: #9ca3af; font-size: 18px; }

/* Desktop taskbar */
.taskbar {
  display: grid;
  grid-template-columns: 1fr auto 1fr;
  align-items: center;
  height: 60px;
  margin-top: 4px;
  border-top: 1px solid #b4b4b6;
  background: linear-gradient(to right, #ebe9e5, #f0e9e3 8%, #efeae5 28%, #d1dfe8 38%, #cfdde6 60%, #d2dde7 78%, #d8d8df);
  font-size: 14px;
  line-height: 20px;
}

.weather { display: flex; gap: 9px; padding: 0 0 4px 27px; text-align: left; }

.weather-icon { display: block; position: relative; padding-top: 9px; }

.badge {
  position: absolute;
  top: 0;
  left: 11px;
  width: 20px;
  border-radius: 50%;
  background: #c42b1c;
  color: #fff;
  font-size: 13px;
  text-align: center;
}

.weather-text, .lang, .clock { display: flex; flex-direction: column; }

.muted { color: #5d5b58; }

.dock { display: flex; align-items: center; gap: 7px; }

.dock-btn {
  display: grid;
  place-items: center;
  width: 48px;
  height: 48px;
  border-radius: 5px;
}

.dock-btn.running, .dock-btn.active {
  grid-template-rows: 44px 4px;
}

.dock-btn.active { background: #e8eff4; }

.dock-btn.running::after, .dock-btn.active::after {
  content: "";
  width: 8px;
  height: 4px;
  border-radius: 2px;
  background: #777d82;
}

.dock-btn.active::after { width: 20px; background: #0a74cc; }

.search {
  display: flex;
  align-items: center;
  width: 273px;
  height: 39px;
  padding: 0 5px 0 14px;
  border-radius: 20px;
  background: rgba(255, 255, 255, 0.75);
  box-shadow: 0 0 1px rgba(0, 0, 0, 0.5);
}

.search-input {
  flex: 1;
  min-width: 0;
  margin-left: 12px;
  padding: 0;
  border: 0;
  outline: 0;
  background: none;
  font-size: 16px;
}

.search-input::placeholder { color: #555; }

.tray {
  display: flex;
  align-items: center;
  justify-content: flex-end;
  padding-right: 24px;
}

.tray-btn { display: grid; place-items: center; width: 40px; height: 48px; }

.lang { width: 56px; padding-bottom: 2px; text-align: center; font-size: 15px; }

.status { display: flex; align-items: center; gap: 10px; margin: 0 20px 0 9px; }

.clock { padding-bottom: 2px; text-align: right; font-size: 15px; }
```
